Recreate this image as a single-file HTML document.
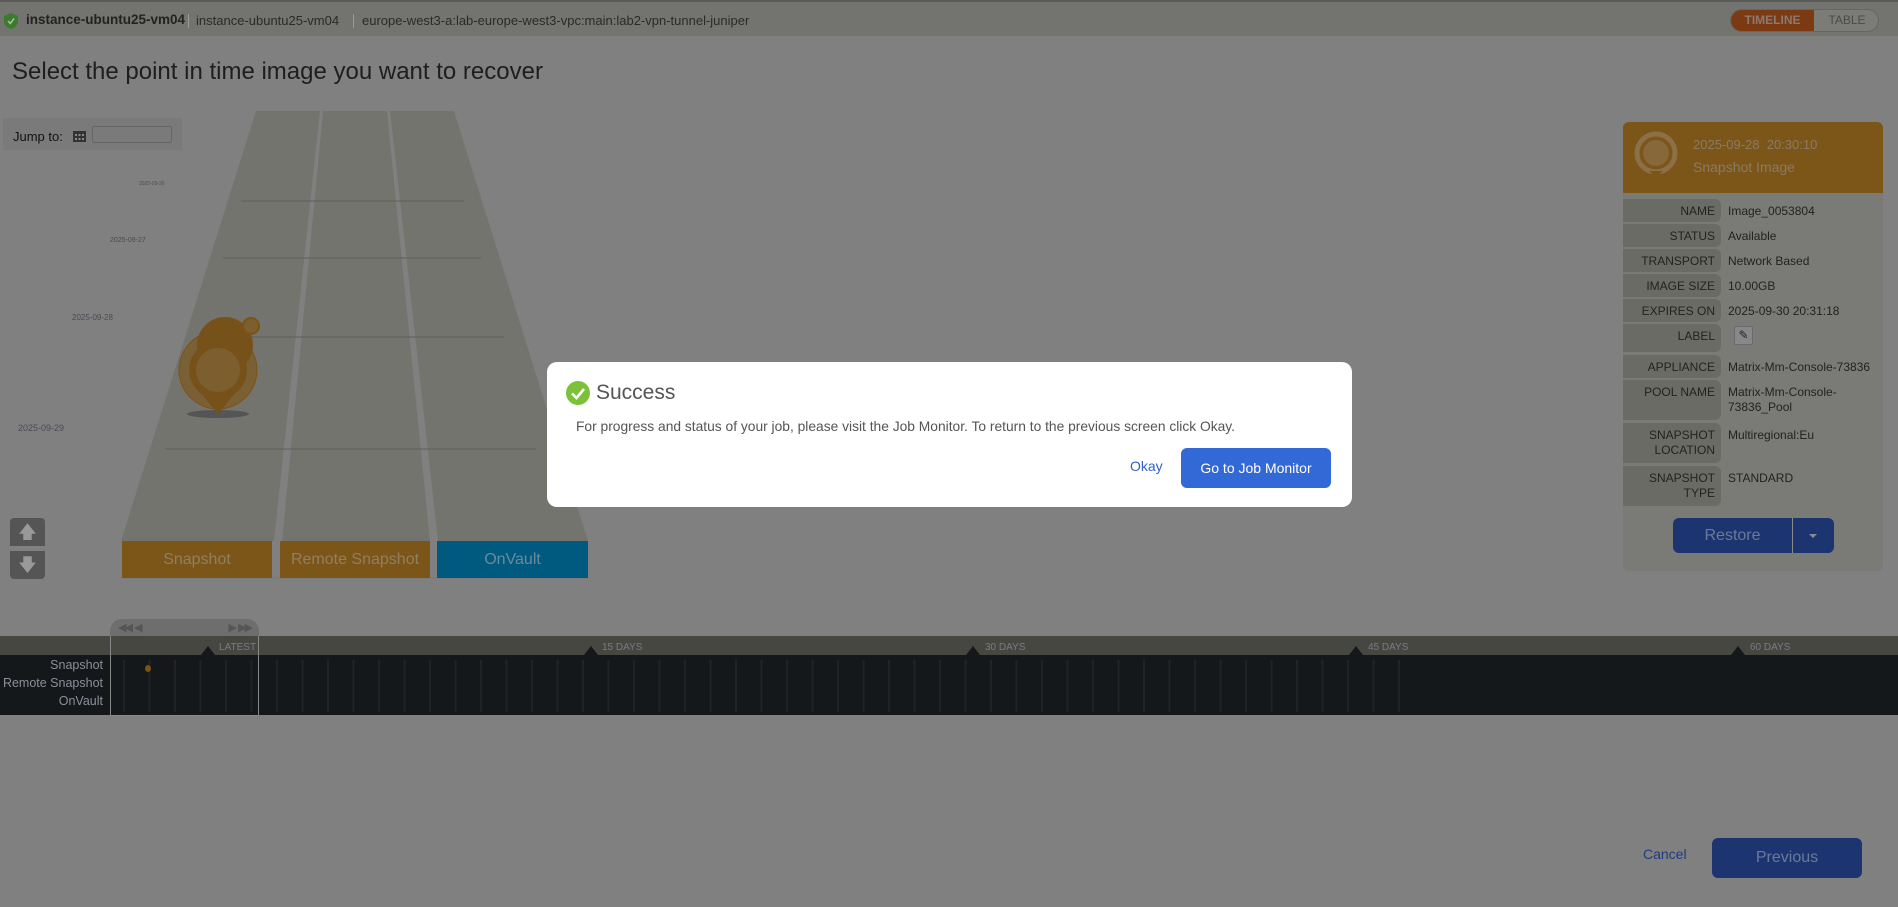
<!DOCTYPE html>
<html><head><meta charset="utf-8"><style>
*{box-sizing:border-box;margin:0;padding:0}
body{width:1898px;height:907px;background:#808080;font-family:"Liberation Sans",sans-serif;position:relative;overflow:hidden}
.abs{position:absolute}
.hdr{left:0;top:0;width:1898px;height:36px;background:#737370;border-top:2px solid #5a5a5a}
.row{position:absolute;left:1623px;width:260px;height:23px;font-size:12px;color:#222}
.row .l{position:absolute;left:0;width:98px;height:100%;background:#6b6b66;border-radius:0 6px 6px 0;text-align:right;padding-right:6px;padding-top:5px;line-height:15px}
.row .v{position:absolute;left:105px;top:5px;line-height:15px;width:150px}
</style></head><body>
<div class="abs hdr">
 <svg class="abs" style="left:4px;top:11px" width="14" height="16" viewBox="0 0 14 16"><path d="M7 0L14 3V8C14 12 11 15 7 16C3 15 0 12 0 8V3Z" fill="#3d7a2e"/><path d="M4 8L6.3 10.5L10 5.5" stroke="#9c9" stroke-width="1.5" fill="none"/></svg>
 <div class="abs" style="left:26px;top:10px;font-size:13.5px;font-weight:bold;color:#222">instance-ubuntu25-vm04</div>
 <div class="abs" style="left:188px;top:12px;height:14px;border-left:1px solid #999"></div>
 <div class="abs" style="left:196px;top:11px;font-size:13px;color:#2a2a2a">instance-ubuntu25-vm04</div>
 <div class="abs" style="left:353px;top:12px;height:14px;border-left:1px solid #999"></div>
 <div class="abs" style="left:362px;top:11px;font-size:13px;color:#2a2a2a">europe-west3-a:lab-europe-west3-vpc:main:lab2-vpn-tunnel-juniper</div>
 <div class="abs" style="left:1730px;top:7px;width:149px;height:23px;border-radius:12px;border:1px solid #666;background:#7b7b78;overflow:hidden">
  <div class="abs" style="left:0;top:0;width:83px;height:23px;background:#7c3a12;color:#8a7a70;font-size:12px;font-weight:bold;text-align:center;line-height:21px">TIMELINE</div>
  <div class="abs" style="left:83px;top:0;width:66px;height:23px;color:#4a4a4a;font-size:12px;text-align:center;line-height:21px">TABLE</div>
 </div>
</div>
<div class="abs" style="left:12px;top:58px;font-size:24px;color:#1e1e1e">Select the point in time image you want to recover</div>
<div class="abs" style="left:3px;top:118px;width:179px;height:32px;background:#7a7a7a"></div>
<div class="abs" style="left:13px;top:129px;font-size:13px;color:#111">Jump to:</div>
<svg class="abs" style="left:73px;top:129px" width="13" height="13"><rect x="0" y="2" width="13" height="11" fill="#333"/><g fill="#888"><rect x="2" y="5" width="2" height="2"/><rect x="5.5" y="5" width="2" height="2"/><rect x="9" y="5" width="2" height="2"/><rect x="2" y="9" width="2" height="2"/><rect x="5.5" y="9" width="2" height="2"/><rect x="9" y="9" width="2" height="2"/></g></svg>
<div class="abs" style="left:92px;top:126px;width:80px;height:17px;border:1px solid #666;border-radius:2px"></div>

<svg class="abs" style="left:0;top:0" width="620" height="600">
 <polygon points="256,111 320,111 274,541 121,541" fill="#74746f"/>
 <polygon points="323,111 387,111 430,541 282,541" fill="#74746f"/>
 <polygon points="390,111 454,111 588,541 438,541" fill="#74746f"/>
 <g stroke="#5e5e5e" stroke-width="1"><line x1="241" y1="201" x2="464" y2="201"/><line x1="223" y1="258" x2="481" y2="258"/><line x1="225" y1="337" x2="504" y2="337"/><line x1="165" y1="449" x2="536" y2="449"/></g>
 <g font-family="Liberation Sans" fill="#4a4a55"><text x="139" y="185" font-size="5">2025-09-26</text><text x="110" y="242" font-size="7">2025-09-27</text><text x="72" y="320" font-size="8">2025-09-28</text><text x="18" y="431" font-size="9">2025-09-29</text></g>
 <ellipse cx="218" cy="414" rx="31" ry="4" fill="#555"/>
 <circle cx="218" cy="370" r="39" fill="#7a6034" stroke="#7a5414"/>
 <circle cx="225" cy="345" r="28" fill="#76521a"/>
 <circle cx="218" cy="370" r="29" fill="#76521a"/>
 <path d="M200 392L218 414L236 392Z" fill="#76521a"/>
 <circle cx="218" cy="370" r="22" fill="#7d5e2e"/>
 <circle cx="251" cy="326" r="8" fill="#7d5e2e" stroke="#7a5414" stroke-width="2"/>
 <line x1="120" y1="578" x2="590" y2="578" stroke="#777"/>
</svg>
<div class="abs" style="left:122px;top:541px;width:150px;height:37px;background:#7c5518;color:#8f8060;font-size:16px;text-align:center;line-height:37px">Snapshot</div>
<div class="abs" style="left:280px;top:541px;width:150px;height:37px;background:#7c5518;color:#8f8060;font-size:16px;text-align:center;line-height:37px">Remote Snapshot</div>
<div class="abs" style="left:437px;top:541px;width:151px;height:37px;background:#005a80;color:#6a8a99;font-size:16px;text-align:center;line-height:37px">OnVault</div>
<div class="abs" style="left:10px;top:518px;width:35px;height:28px;background:#555;border-radius:4px 4px 0 0;color:#999;font-size:18px;text-align:center;line-height:28px">&#129093;</div>
<div class="abs" style="left:10px;top:551px;width:35px;height:28px;background:#555;border-radius:0 0 4px 4px;color:#999;font-size:18px;text-align:center;line-height:28px">&#129095;</div>

<div class="abs" style="left:0;top:636px;width:1898px;height:19px;background:#474742"></div>
<div class="abs" style="left:0;top:655px;width:1898px;height:60px;background:#15181b"></div>
<div class="abs" style="left:123px;top:660px;width:1280px;height:52px;background:repeating-linear-gradient(90deg,#202326 0 2px,transparent 2px 25.5px)"></div>
<div class="abs" style="left:110px;top:619px;width:149px;height:17px;background:#6e6e6e;border-radius:12px 12px 0 0;color:#555;font-size:11px;letter-spacing:-2px;padding:2px 8px">◀◀ &nbsp;&nbsp;◀ <span style="position:absolute;right:8px">▶ &nbsp;&nbsp;▶▶</span></div>
<div class="abs" style="left:110px;top:636px;width:149px;height:80px;border:1px solid #888;border-top:none"></div>
<svg class="abs" style="left:0;top:636px" width="1898" height="20"><g fill="#15181b"><path d="M201 19L208 10L215 19Z"/><path d="M584 19L591 10L598 19Z"/><path d="M966 19L973 10L980 19Z"/><path d="M1349 19L1356 10L1363 19Z"/><path d="M1731 19L1738 10L1745 19Z"/></g>
<g font-family="Liberation Sans" font-size="10" fill="#7a7a85"><text x="219" y="14">LATEST</text><text x="602" y="14">15 DAYS</text><text x="985" y="14">30 DAYS</text><text x="1368" y="14">45 DAYS</text><text x="1750" y="14">60 DAYS</text></g></svg>
<div class="abs" style="left:0;top:656px;width:103px;text-align:right;font-size:12.5px;color:#8e8e99;line-height:18px">Snapshot<br>Remote Snapshot<br>OnVault</div>
<div class="abs" style="left:145px;top:665px;width:6px;height:7px;border-radius:50%;background:#7a5414"></div>

<div class="abs" style="left:1623px;top:122px;width:260px;height:449px;background:#7a7a77;border-radius:6px"></div>
<div class="abs" style="left:1623px;top:122px;width:260px;height:71px;background:#7c5518;border-radius:6px 6px 0 0"></div>
<svg class="abs" style="left:1632px;top:129px" width="48" height="50"><circle cx="24" cy="24" r="19" fill="none" stroke="#8b7048" stroke-width="5"/><path d="M17 42L24 48L31 42Z" fill="#7c5518"/><circle cx="24" cy="24" r="13" fill="#86683a"/></svg>
<div class="abs" style="left:1693px;top:137px;font-size:13px;color:#8a7a66">2025-09-28 &nbsp;20:30:10</div>
<div class="abs" style="left:1693px;top:159px;font-size:14px;color:#8a7a66">Snapshot Image</div>
<div class="row" style="top:199px"><div class="l">NAME</div><div class="v">Image_0053804</div></div>
<div class="row" style="top:224px"><div class="l">STATUS</div><div class="v">Available</div></div>
<div class="row" style="top:249px"><div class="l">TRANSPORT</div><div class="v">Network Based</div></div>
<div class="row" style="top:274px"><div class="l">IMAGE SIZE</div><div class="v">10.00GB</div></div>
<div class="row" style="top:299px"><div class="l">EXPIRES ON</div><div class="v">2025-09-30 20:31:18</div></div>
<div class="row" style="top:324px;height:28px"><div class="l">LABEL</div><div class="v" style="top:2px;left:111px;width:19px;height:19px;background:#888;border:1px solid #6a6a6a;border-radius:2px;text-align:center;font-size:12px;line-height:17px">&#9998;</div></div>
<div class="row" style="top:355px"><div class="l">APPLIANCE</div><div class="v">Matrix-Mm-Console-73836</div></div>
<div class="row" style="top:380px;height:40px"><div class="l">POOL NAME</div><div class="v">Matrix-Mm-Console-<br>73836_Pool</div></div>
<div class="row" style="top:423px;height:40px"><div class="l">SNAPSHOT<br>LOCATION</div><div class="v">Multiregional:Eu</div></div>
<div class="row" style="top:466px;height:40px"><div class="l">SNAPSHOT<br>TYPE</div><div class="v">STANDARD</div></div>
<div class="abs" style="left:1673px;top:518px;width:161px;height:35px;background:#1c3570;border-radius:6px"></div>
<div class="abs" style="left:1673px;top:518px;width:120px;height:35px;color:#6a7a99;font-size:16px;text-align:center;line-height:35px;border-right:1px solid #8a8a8a">Restore</div>
<div class="abs" style="left:1809px;top:534px;border:4px solid transparent;border-top:4px solid #8a8a99"></div>

<div class="abs" style="left:1643px;top:846px;font-size:14px;color:#1f3a80">Cancel</div>
<div class="abs" style="left:1712px;top:838px;width:150px;height:40px;background:#1c3570;border-radius:6px;color:#6a7a99;font-size:16px;text-align:center;line-height:40px">Previous</div>

<div class="abs" style="left:547px;top:362px;width:805px;height:145px;background:#fff;border-radius:10px"></div>
<svg class="abs" style="left:566px;top:381px" width="24" height="24"><circle cx="12" cy="12" r="12" fill="#7cc13a"/><path d="M6 12.5L10.5 17L18 8" stroke="#fff" stroke-width="2.6" fill="none"/></svg>
<div class="abs" style="left:596px;top:381px;font-size:21px;color:#555">Success</div>
<div class="abs" style="left:576px;top:419px;font-size:13.8px;color:#555">For progress and status of your job, please visit the Job Monitor. To return to the previous screen click Okay.</div>
<div class="abs" style="left:1130px;top:458px;font-size:14px;color:#2f62c7">Okay</div>
<div class="abs" style="left:1181px;top:448px;width:150px;height:40px;background:#3369d6;border-radius:6px;color:#fff;font-size:14px;text-align:center;line-height:40px">Go to Job Monitor</div>
</body></html>
